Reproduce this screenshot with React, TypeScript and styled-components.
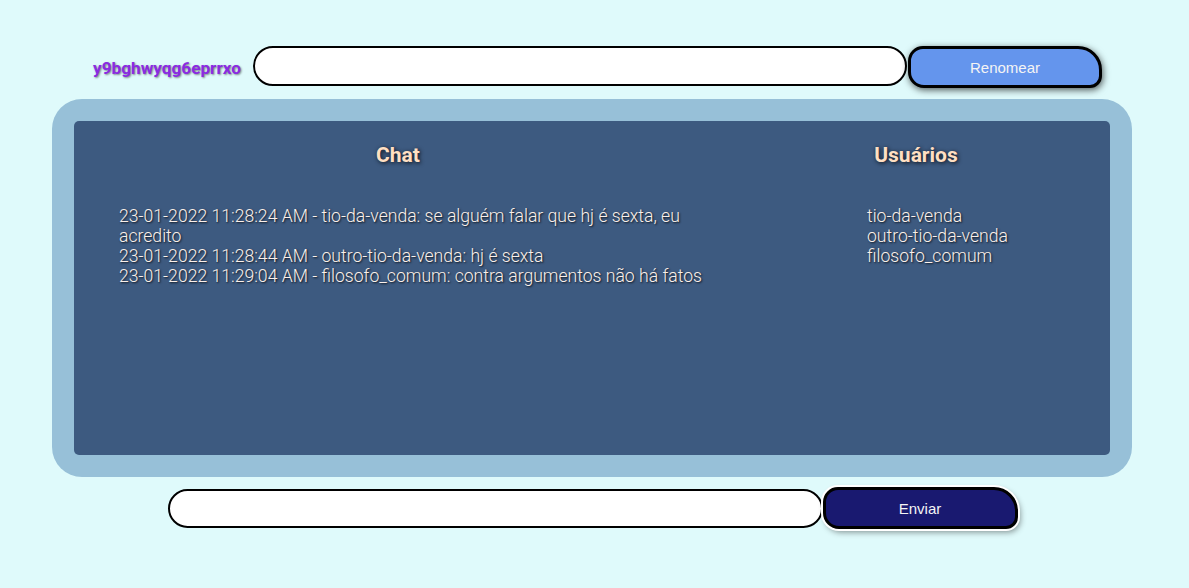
import React from "react";
import styled, { createGlobalStyle } from "styled-components";

const Global = createGlobalStyle`
  html, body { margin: 0; padding: 0; background: #dffafb; }
  body { font-family: Roboto, "Liberation Sans", sans-serif; }
  * { box-sizing: border-box; }
`;

const Page = styled.div`
  display: flex;
  flex-direction: column;
  align-items: center;
  padding-top: 46px;
  min-height: 588px;
`;

const TopRow = styled.div`
  display: flex;
  align-items: flex-start;
  margin-left: 6px;
`;

const UserName = styled.span`
  align-self: center;
  margin-top: 2px;
  width: 160px;
  font-family: Roboto, "Liberation Sans", sans-serif;
  font-weight: 700;
  font-size: 17.2px;
  color: #8a2be2;
  text-shadow: 1px 1px 2px rgba(0, 0, 0, 0.45);
  white-space: nowrap;
`;

const TextInput = styled.input<{ $h: number; $w: number }>`
  width: ${(p) => p.$w}px;
  height: ${(p) => p.$h}px;
  border: 2px solid #000;
  border-radius: 20px;
  background: #fff;
  outline: none;
  padding: 0 16px;
  font-size: 16px;
`;

const ActionButton = styled.button<{ $bg: string; $ring?: boolean; $w: number }>`
  width: ${(p) => p.$w}px;
  height: 42px;
  margin-left: ${(p) => (p.$ring ? 0 : 1)}px;
  background: ${(p) => p.$bg};
  border: 3px solid #000;
  border-radius: 15px 24px 12px 16px;
  color: #f4f4f4;
  font-family: "Liberation Sans", Arial, sans-serif;
  font-size: 15px;
  cursor: pointer;
  box-shadow: ${(p) =>
    p.$ring
      ? "0 0 0 2px #ffffff, 2px 3px 6px rgba(0,0,0,0.45)"
      : "1px 2px 7px rgba(0,0,0,0.65)"};
`;

const Panel = styled.div`
  margin-top: 11px;
  margin-right: 5px;
  width: 1080px;
  padding: 22px;
  background: #97c0d8;
  border-radius: 30px;
`;

const Inner = styled.div`
  height: 334px;
  background: #3d5a80;
  border-radius: 5px;
  display: grid;
  grid-template-columns: 648px 1fr;
`;

const Column = styled.section<{ $listPad: number }>`
  display: flex;
  flex-direction: column;
  ul {
    padding-left: ${(p) => p.$listPad}px;
  }
`;

const Heading = styled.h2`
  margin: 22px 0 0;
  text-align: center;
  font-family: Roboto, sans-serif;
  font-weight: 700;
  font-size: 21px;
  line-height: 25px;
  color: #ffdfc2;
  text-shadow: 1px 1px 4px rgba(0, 0, 0, 0.85);
`;

const List = styled.ul`
  list-style: none;
  margin: 38px 0 0;
  padding-right: 0;
`;

const Item = styled.li`
  font-family: Roboto, sans-serif;
  font-weight: 300;
  font-size: 17.6px;
  line-height: 20px;
  color: #fbf0ea;
  text-shadow: 1px 1px 2px rgba(0, 0, 0, 0.8);
`;

const BottomRow = styled.div`
  display: flex;
  align-items: center;
  margin-top: 10px;
  margin-right: 4px;
`;

const messages = [
  "23-01-2022 11:28:24 AM - tio-da-venda: se alguém falar que hj é sexta, eu acredito",
  "23-01-2022 11:28:44 AM - outro-tio-da-venda: hj é sexta",
  "23-01-2022 11:29:04 AM - filosofo_comum: contra argumentos não há fatos",
];

const users = ["tio-da-venda", "outro-tio-da-venda", "filosofo_comum"];

export default function App() {
  return (
    <>
      <Global />
      <Page>
        <TopRow>
          <UserName>y9bghwyqg6eprrxo</UserName>
          <TextInput $h={40} $w={654} />
          <ActionButton $bg="#6495ed" $w={194}>Renomear</ActionButton>
        </TopRow>
        <Panel>
          <Inner>
            <Column $listPad={45}>
              <Heading>Chat</Heading>
              <List>
                {messages.map((m) => (
                  <Item key={m}>{m}</Item>
                ))}
              </List>
            </Column>
            <Column $listPad={145}>
              <Heading>Usuários</Heading>
              <List>
                {users.map((u) => (
                  <Item key={u}>{u}</Item>
                ))}
              </List>
            </Column>
          </Inner>
        </Panel>
        <BottomRow>
          <TextInput $h={39} $w={655} />
          <ActionButton $bg="#191970" $ring $w={195}>Enviar</ActionButton>
        </BottomRow>
      </Page>
    </>
  );
}
